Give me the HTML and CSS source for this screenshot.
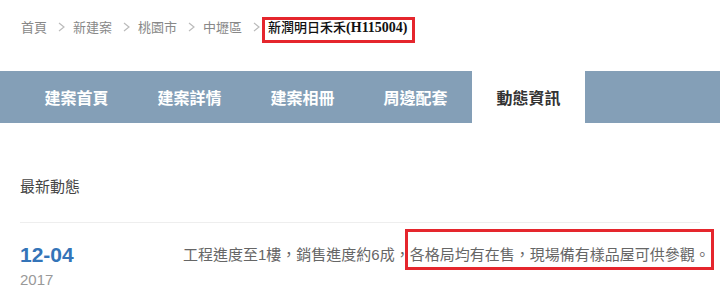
FILE: index.html
```html
<!DOCTYPE html>
<html lang="zh-TW">
<head>
<meta charset="utf-8">
<title>新潤明日禾禾</title>
<link rel="stylesheet" href="styles.css">
</head>
<body>
<nav class="crumbs">
  <a class="crumb" href="#">首頁</a>
  <svg class="sep" width="7" height="10" viewBox="0 0 7 10"><polyline points="1,1 6,5 1,9" fill="none" stroke="#bbb" stroke-width="1.2"/></svg>
  <a class="crumb" href="#">新建案</a>
  <svg class="sep" width="7" height="10" viewBox="0 0 7 10"><polyline points="1,1 6,5 1,9" fill="none" stroke="#bbb" stroke-width="1.2"/></svg>
  <a class="crumb" href="#">桃園市</a>
  <svg class="sep" width="7" height="10" viewBox="0 0 7 10"><polyline points="1,1 6,5 1,9" fill="none" stroke="#bbb" stroke-width="1.2"/></svg>
  <a class="crumb" href="#">中壢區</a>
  <svg class="sep" width="7" height="10" viewBox="0 0 7 10"><polyline points="1,1 6,5 1,9" fill="none" stroke="#bbb" stroke-width="1.2"/></svg>
  <h1 class="title marked-title"><span class="title-cjk">新潤明日禾禾</span>(H115004)</h1>
</nav>

<div class="tabbar">
  <ul class="tabs">
    <li class="tab">建案首頁</li>
    <li class="tab">建案詳情</li>
    <li class="tab">建案相冊</li>
    <li class="tab">周邊配套</li>
    <li class="tab active">動態資訊</li>
  </ul>
</div>

<section class="news">
  <h2 class="news-title">最新動態</h2>
  <div class="news-item">
    <div class="date">
      <div class="md">12-04</div>
      <div class="year">2017</div>
    </div>
    <p class="desc">工程進度至1樓，銷售進度約6成，<span class="marked">各格局均有在售，現場備有樣品屋可供參觀。</span></p>
  </div>
</section>
</body>
</html>
```

FILE: styles.css
```css
* { box-sizing: border-box; }
html, body { margin: 0; padding: 0; background: #fff; }
body {
  font-family: "Liberation Sans", "Noto Sans CJK TC", sans-serif;
  color: #333;
  width: 720px;
  overflow: hidden;
}

.crumbs {
  display: flex;
  align-items: center;
  padding: 17px 20px 0 21px;
  height: 37px;
}
.crumb {
  font-family: "Noto Sans CJK TC", sans-serif;
  font-size: 13px;
  line-height: 20px;
  color: #888;
  text-decoration: none;
}
.sep { margin: 0 8px 0 11px; flex: none; }
.title {
  margin: 0;
  font-family: "Liberation Serif", "Noto Sans CJK TC", serif;
  font-weight: 700;
  font-size: 14px;
  line-height: 20px;
  color: #111;
  position: relative;
  white-space: nowrap;
}
.title-cjk {
  font-family: "Noto Sans CJK TC", sans-serif;
  font-size: 13px;
  font-weight: 500;
}
.marked-title::after {
  content: "";
  position: absolute;
  left: -6px;
  right: -7px;
  top: 0;
  bottom: -5px;
  border: 3px solid #e5262d;
}

.tabbar {
  margin-top: 34px;
  background: #849fb7;
  height: 52px;
  padding-left: 20px;
}
.tabs {
  list-style: none;
  margin: 0;
  padding: 0;
  display: flex;
  height: 100%;
}
.tab {
  width: 113px;
  text-align: center;
  line-height: 52px;
  font-family: "Noto Sans CJK TC", sans-serif;
  font-size: 16px;
  font-weight: 700;
  color: #fff;
}
.tab.active {
  background: #fff;
  color: #333;
}

.news { padding: 53px 20px 0 20px; }
.news-title {
  margin: 0;
  font-family: "Noto Sans CJK TC", sans-serif;
  font-size: 15px;
  font-weight: 400;
  line-height: 20px;
  color: #444;
  padding-bottom: 26px;
  border-bottom: 1px solid #eee;
}
.news-item {
  display: grid;
  grid-template-columns: 163px 1fr;
  padding-top: 20px;
}
.md {
  font-family: "Liberation Sans", sans-serif;
  font-weight: 700;
  font-size: 21px;
  line-height: 24px;
  color: #3474b8;
}
.year {
  margin-top: 3px;
  font-family: "Liberation Sans", sans-serif;
  font-size: 15px;
  line-height: 20px;
  color: #999;
}
.desc {
  margin: 0;
  font-size: 15px;
  line-height: 24px;
  color: #666;
  white-space: nowrap;
}
.marked {
  display: inline-block;
  position: relative;
}
.marked::after {
  content: "";
  position: absolute;
  left: -5px;
  right: -4px;
  top: -14px;
  bottom: -3px;
  border: 3px solid #e5262d;
}
```
